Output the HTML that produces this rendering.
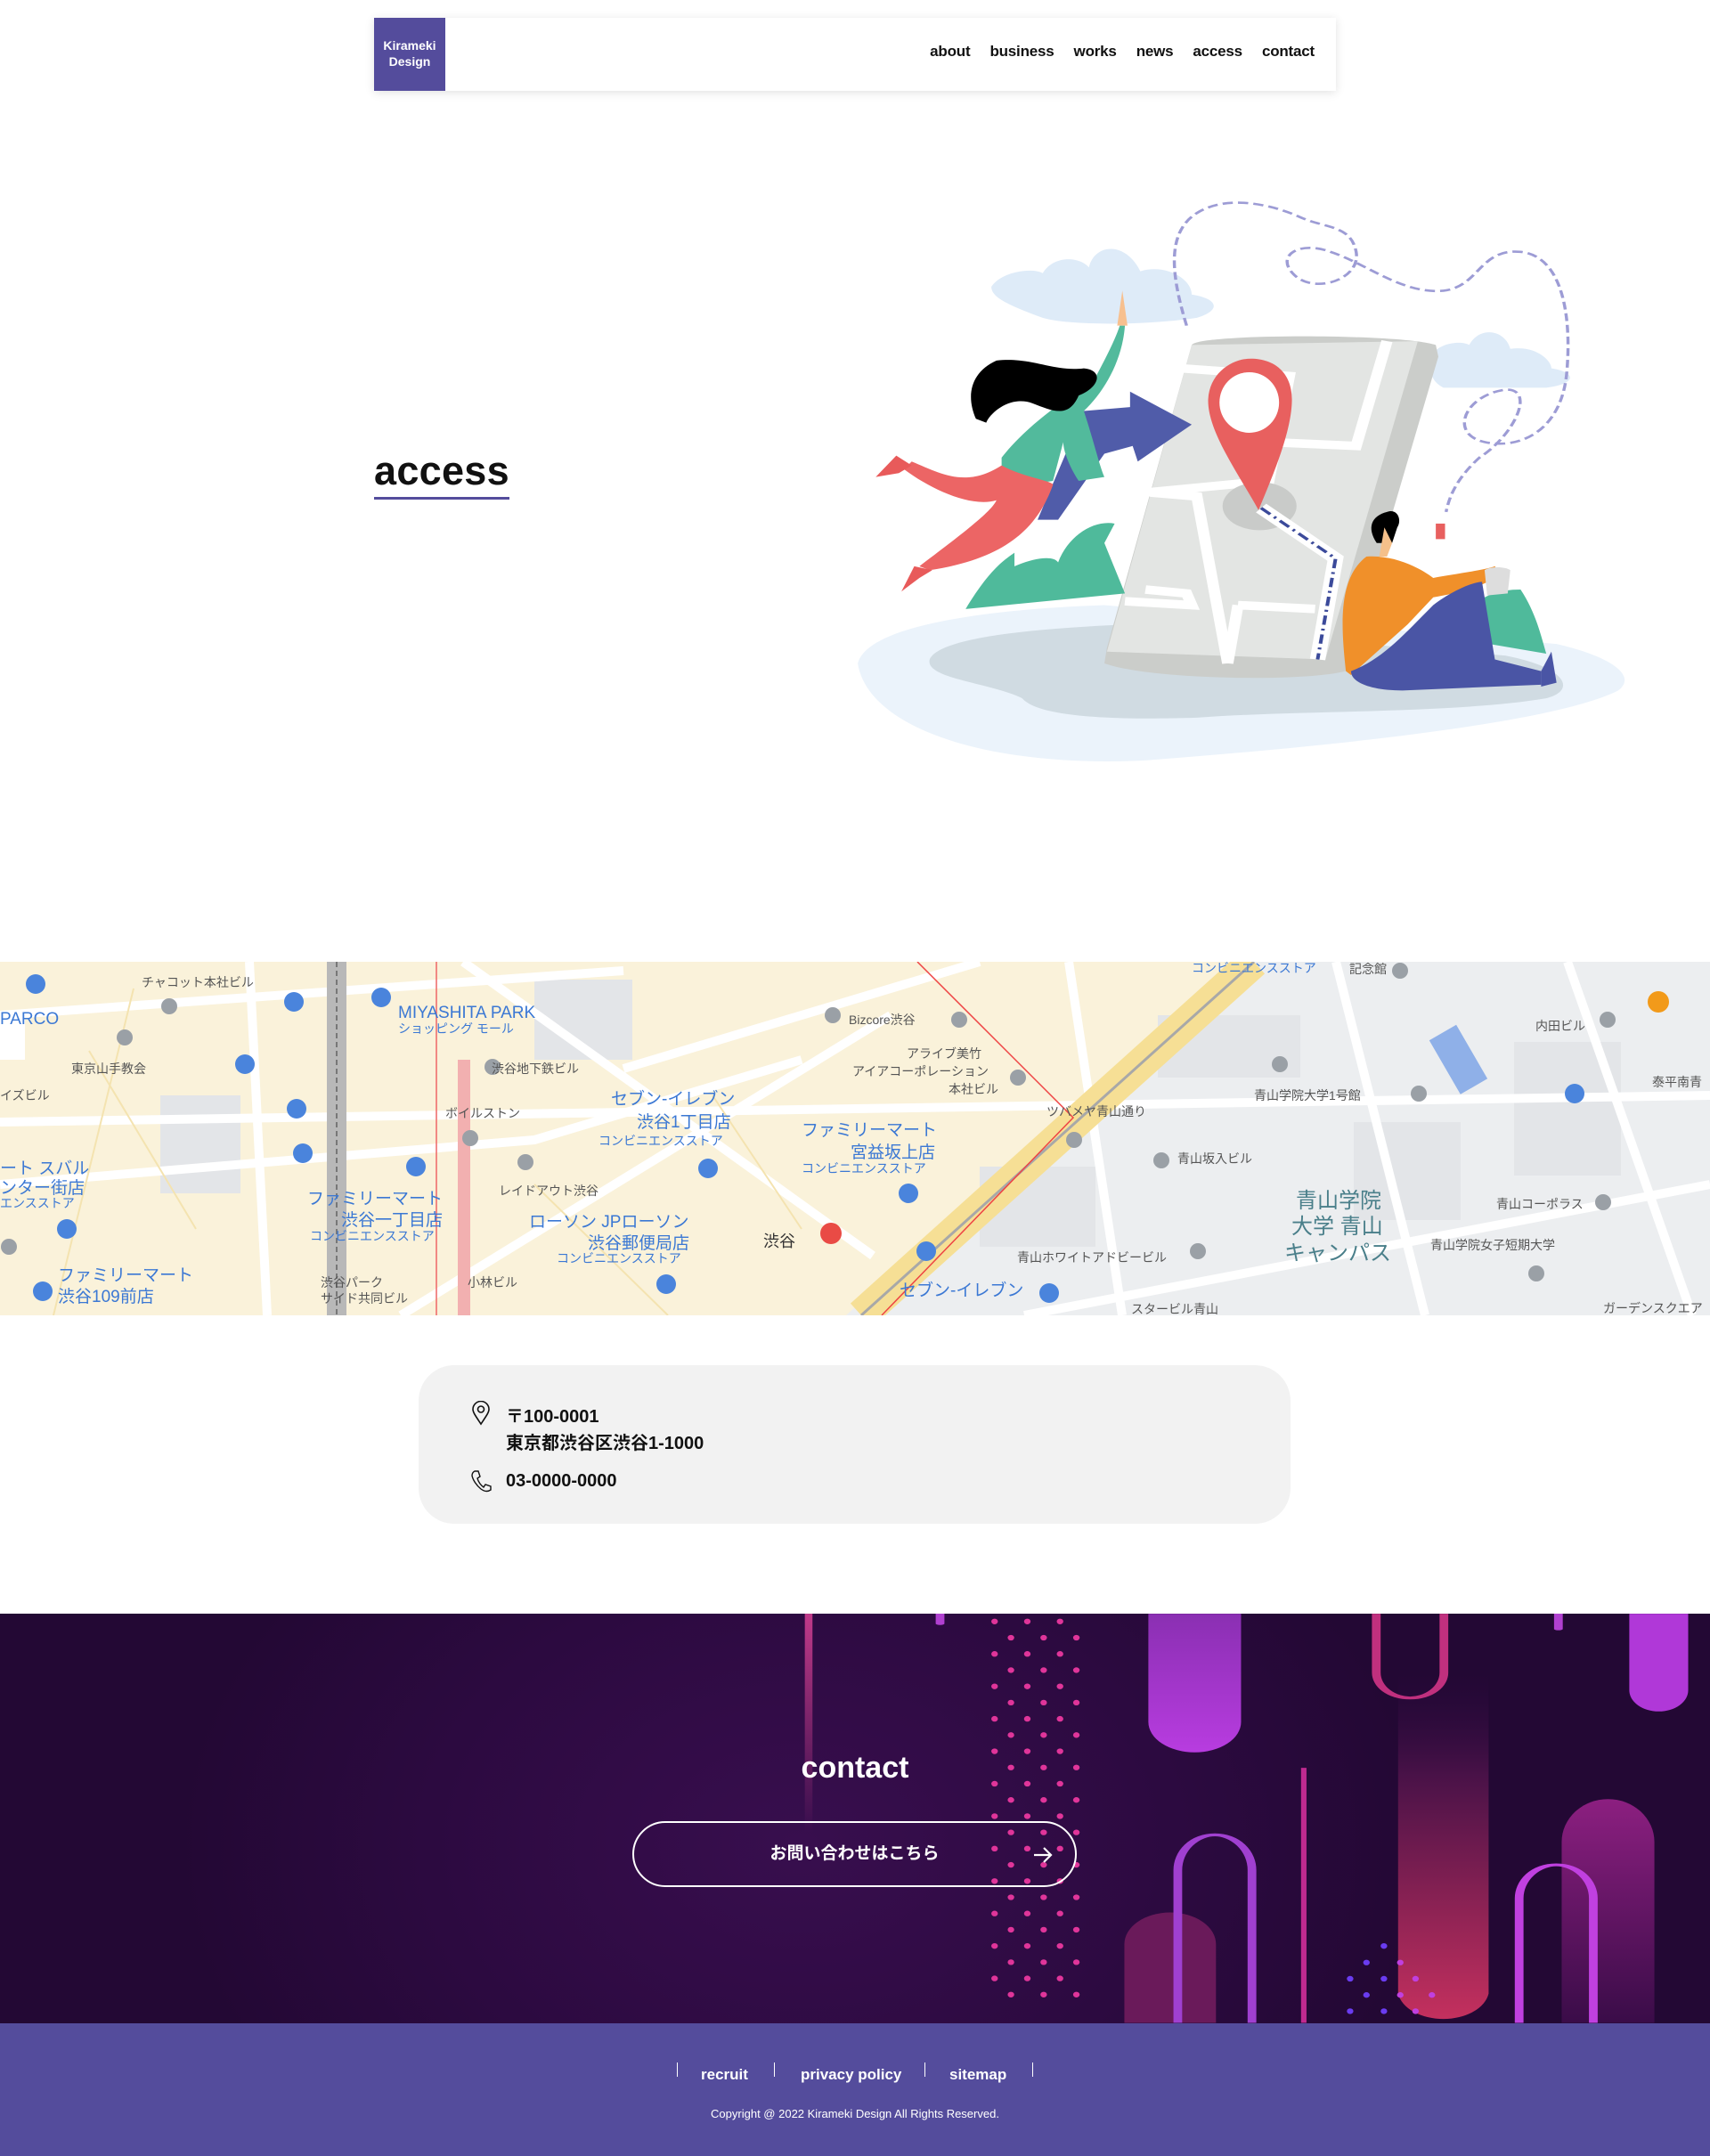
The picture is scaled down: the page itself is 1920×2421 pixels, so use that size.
<!DOCTYPE html>
<html><head><meta charset="utf-8"><style>
*{margin:0;padding:0;box-sizing:border-box}
body{width:1920px;height:2421px;position:relative;background:#fff;font-family:"Liberation Sans","Noto Sans CJK JP",sans-serif;overflow:hidden;color:#111}
.hdr{position:absolute;left:420px;top:20px;width:1080px;height:82px;background:#fff;box-shadow:0 2px 10px rgba(0,0,0,.12)}
.logo{position:absolute;left:0;top:0;width:80px;height:82px;background:#544c9c;color:#fff;font-weight:bold;font-size:14px;line-height:18px;text-align:center;padding-top:22px}
.nav{position:absolute;right:24px;top:28px;font-weight:bold;font-size:17px;letter-spacing:-.2px}
.nav span{margin-left:22px}
.h1{position:absolute;left:420px;top:502px;font-size:45px;font-weight:bold;letter-spacing:.3px;border-bottom:3px solid #544c9c;line-height:54px;padding-bottom:2px}
.addr{position:absolute;left:470px;top:1533px;width:979px;height:178px;background:#f2f2f2;border-radius:40px}
.addr p{position:absolute;left:98px;font-size:20px;font-weight:bold;line-height:24px}
.ct{position:absolute;left:0;top:1812px;width:1920px;height:460px;overflow:hidden;background:radial-gradient(ellipse 700px 500px at 900px 260px,#380e4e,#2c0a40 60%,#230834)}
.foot{position:absolute;left:0;top:2272px;width:1920px;height:149px;background:#544c9c;color:#fff}
</style></head><body>

<div class="hdr"><div class="logo">Kirameki<br>Design</div>
<div class="nav"><span>about</span><span>business</span><span>works</span><span>news</span><span>access</span><span>contact</span></div></div>

<div class="h1">access</div>

<svg style="position:absolute;left:940px;top:200px" width="900" height="680" viewBox="0 0 1560 1560" preserveAspectRatio="none">
<path d="M40 1250 C60 1150 300 1110 520 1100 L1400 1200 C1500 1230 1560 1280 1520 1320 C1400 1400 1000 1460 600 1500 C300 1520 60 1420 40 1250Z" fill="#ebf3fb"/>
<path d="M180 1240 C200 1180 400 1160 560 1150 L1300 1230 C1420 1260 1440 1320 1380 1340 C1200 1380 900 1370 700 1390 C450 1400 380 1370 360 1340 C300 1300 170 1290 180 1240Z" fill="#d0dbe2"/>
<g fill="#deebf8"><path d="M300 280 C320 240 380 230 400 245 C420 200 470 200 490 230 C500 170 560 160 590 240 C640 220 690 260 690 300 C740 310 750 340 700 360 C600 380 450 380 400 360 C340 330 300 310 300 280Z"/><path d="M1160 450 C1180 420 1220 420 1230 430 C1250 380 1300 390 1310 440 C1360 430 1390 470 1390 490 C1440 500 1440 530 1380 540 L1180 540 C1150 520 1150 480 1160 450Z"/></g>
<path d="M680 380 C650 250 640 140 700 90 C760 40 850 70 900 100 C950 130 1000 120 1010 190 C1020 260 930 300 890 250 C850 200 900 160 960 190 C1030 220 1100 300 1180 290 C1250 280 1250 180 1330 190 C1410 200 1430 350 1420 500 C1410 650 1330 700 1260 680 C1190 660 1220 560 1300 545 C1360 540 1320 660 1250 720 C1200 780 1190 830 1185 860" fill="none" stroke="#9d9cd5" stroke-width="6" stroke-dasharray="20 10"/>
<path d="M690 430 C700 400 1100 400 1165 430 L1170 460 L990 1270 C900 1300 600 1290 520 1250 L525 1210Z" fill="#cbcdca"/>
<path d="M690 430 L1130 420 L950 1240 L525 1220Z" fill="#e3e5e3"/>
<g fill="none" stroke="#fff" stroke-width="22"><path d="M670 490 L880 510 L840 780 L600 810"/><path d="M1070 420 L1010 690 L840 680"/><path d="M610 810 L700 820 L760 1250"/><path d="M600 1060 L680 1070 L690 1100 L560 1090"/><path d="M780 1100 L930 1110"/><path d="M780 1100 L760 1250"/></g>
<ellipse cx="822" cy="845" rx="72" ry="62" fill="#c9cbc9"/>
<path d="M825 850 L970 980 L935 1240" fill="none" stroke="#fff" stroke-width="30"/>
<path d="M825 850 L970 980 L935 1240" fill="none" stroke="#3b4a9a" stroke-width="7" stroke-dasharray="24 10 5 10"/>
<path d="M820 855 C780 760 720 650 722 570 C725 500 770 465 805 465 C850 465 885 500 885 570 C885 650 850 760 820 855Z" fill="#e8605f"/>
<ellipse cx="802" cy="578" rx="58" ry="78" fill="#fff"/>
<g fill="#4fba9b"><path d="M250 1110 C300 1000 330 980 345 965 L345 1000 C380 980 420 970 430 990 C450 920 500 880 540 890 L520 940 L560 1070 Z"/><path d="M1180 1180 C1230 1100 1260 1060 1330 1060 C1360 1120 1370 1180 1380 1225Z"/></g>
<path d="M480 600 L570 590 L570 550 L690 635 L585 730 L575 690 L520 710 L430 880 L390 880Z" fill="#505ca9"/>
<path d="M320 720 C380 620 460 560 500 520 C520 470 540 420 550 380 L560 380 C555 470 520 550 480 600 C500 680 510 740 520 770 L470 780 C450 740 440 700 440 680 L420 780 C380 790 340 770 320 740Z" fill="#52ba9c"/>
<path d="M545 380 L555 290 L565 380Z" fill="#f7c08f"/>
<path d="M270 620 C250 560 260 500 310 470 C380 460 420 500 480 490 C520 495 510 540 470 560 C450 620 420 600 380 580 C340 560 300 600 290 630Z" fill="#000"/>
<path d="M320 740 C360 770 420 780 420 790 C390 900 330 980 180 1010 L160 1000 C240 920 300 860 310 830 C260 850 180 800 130 750 L145 730 C200 760 250 800 320 740Z" fill="#ec6565"/>
<path d="M75 770 L115 715 L145 740 L120 760Z" fill="#e85a5a"/><path d="M125 1065 L150 1000 L185 1010 L160 1030Z" fill="#e85a5a"/>
<path d="M990 1270 C980 1150 975 1030 1030 975 C1080 970 1130 1000 1160 1030 C1200 1020 1260 1010 1280 1000 L1290 1020 C1250 1060 1200 1070 1160 1080 L1110 1150 L1000 1280Z" fill="#f0902a"/>
<path d="M1000 1270 C1060 1240 1100 1180 1160 1100 C1200 1060 1240 1040 1255 1040 L1280 1240 L1370 1270 L1370 1305 L1100 1320 C1040 1320 1000 1300 1000 1270Z" fill="#4a55a5"/>
<path d="M1370 1270 L1390 1220 L1400 1300 L1370 1310Z" fill="#4a55a5"/>
<path d="M1050 940 C1030 900 1040 870 1070 860 C1090 850 1100 880 1090 900 L1080 940Z" fill="#000"/>
<path d="M1065 900 L1080 940 L1070 975 L1055 975Z" fill="#f5c08a"/>
<rect x="1165" y="890" width="18" height="40" fill="#e8605f"/>
<path d="M1260 1010 C1270 1000 1300 1000 1310 1010 L1305 1070 L1265 1075Z" fill="#ddd"/>
</svg>

<svg style="position:absolute;left:0;top:1080px" width="1920" height="397" viewBox="0 0 1920 397">
<rect width="1920" height="397" fill="#eceef0"/>
<path d="M0 0 L1390 0 L950 397 L0 397Z" fill="#faf2da"/>
<g fill="#e3e5e8"><rect x="600" y="20" width="110" height="90"/><rect x="180" y="150" width="90" height="110"/><rect x="1520" y="180" width="120" height="110"/><rect x="1300" y="60" width="160" height="70"/><rect x="1700" y="90" width="120" height="150"/><rect x="1100" y="230" width="130" height="90"/></g>
<rect x="1620" y="75" width="35" height="70" fill="#8fb0e8" transform="rotate(-30 1637 110)"/>
<g stroke="#fff" stroke-width="10" fill="none"><path d="M0 60 L700 10"/><path d="M0 250 L600 200 L900 110"/><path d="M450 397 L1000 60"/><path d="M520 0 L980 330"/><path d="M280 0 L300 397"/><path d="M0 180 L1920 150"/><path d="M1500 0 L1600 397"/><path d="M1150 397 L1920 250"/><path d="M700 120 L1100 0"/><path d="M1200 0 L1260 397"/><path d="M1760 0 L1900 397"/></g>
<g stroke="#f4e3b0" stroke-width="2" fill="none"><path d="M100 100 L220 300"/><path d="M600 250 L750 397"/><path d="M800 150 L900 300"/><path d="M150 30 L60 397"/></g>
<path d="M1408 0 L967 397" stroke="#f6df95" stroke-width="36"/>
<path d="M1408 0 L967 397" stroke="#a8a8a8" stroke-width="3"/>
<path d="M1030 0 L1205 175 L990 397" stroke="#e44" stroke-width="1.5" fill="none"/>
<rect x="367" y="0" width="22" height="397" fill="#b8b8b8"/><path d="M378 0 V397" stroke="#777" stroke-width="2" stroke-dasharray="6 4"/>
<rect x="514" y="110" width="14" height="287" fill="#f2b0b0"/>
<path d="M490 0 L490 397" stroke="#e66" stroke-width="1.5"/>
<rect x="0" y="55" width="28" height="55" fill="#fff"/>
<g fill="#9aa0a6"><circle cx="190" cy="50" r="9"/><circle cx="140" cy="85" r="9"/><circle cx="553" cy="118" r="9"/><circle cx="528" cy="198" r="9"/><circle cx="590" cy="225" r="9"/><circle cx="935" cy="60" r="9"/><circle cx="1077" cy="65" r="9"/><circle cx="1143" cy="130" r="9"/><circle cx="1437" cy="115" r="9"/><circle cx="1593" cy="148" r="9"/><circle cx="1206" cy="200" r="9"/><circle cx="1304" cy="223" r="9"/><circle cx="1345" cy="325" r="9"/><circle cx="1800" cy="270" r="9"/><circle cx="1725" cy="350" r="9"/><circle cx="1572" cy="10" r="9"/><circle cx="1805" cy="65" r="9"/><circle cx="10" cy="320" r="9"/></g>
<g fill="#4a84dc"><circle cx="40" cy="25" r="11"/><circle cx="330" cy="45" r="11"/><circle cx="275" cy="115" r="11"/><circle cx="333" cy="165" r="11"/><circle cx="340" cy="215" r="11"/><circle cx="467" cy="230" r="11"/><circle cx="795" cy="232" r="11"/><circle cx="1020" cy="260" r="11"/><circle cx="1040" cy="325" r="11"/><circle cx="748" cy="362" r="11"/><circle cx="75" cy="300" r="11"/><circle cx="48" cy="370" r="11"/><circle cx="1768" cy="148" r="11"/><circle cx="1178" cy="372" r="11"/><circle cx="428" cy="40" r="11"/></g>
<circle cx="933" cy="305" r="12" fill="#e94b45"/><circle cx="1862" cy="45" r="12" fill="#f29a1a"/>
<g font-family="Liberation Sans,Noto Sans CJK JP,sans-serif">
<g fill="#3b78d4" font-size="19"><text x="447" y="63">MIYASHITA PARK</text><text x="0" y="70">PARCO</text><text x="686" y="160">セブン-イレブン</text><text x="715" y="186">渋谷1丁目店</text><text x="900" y="195">ファミリーマート</text><text x="955" y="220">宮益坂上店</text><text x="594" y="298">ローソン JPローソン</text><text x="660" y="322">渋谷郵便局店</text><text x="345" y="272">ファミリーマート</text><text x="383" y="296">渋谷一丁目店</text><text x="65" y="358">ファミリーマート</text><text x="65" y="382">渋谷109前店</text><text x="0" y="238">ート スバル</text><text x="0" y="260">ンター街店</text><text x="1010" y="375">セブン-イレブン</text></g>
<g fill="#3b78d4" font-size="14"><text x="447" y="80">ショッピング モール</text><text x="672" y="206">コンビニエンスストア</text><text x="900" y="237">コンビニエンスストア</text><text x="625" y="338">コンビニエンスストア</text><text x="348" y="313">コンビニエンスストア</text><text x="1338" y="12">コンビニエンスストア</text><text x="0" y="276">エンスストア</text></g>
<g fill="#555" font-size="14"><text x="159" y="28">チャコット本社ビル</text><text x="953" y="70">Bizcore渋谷</text><text x="1018" y="108">アライブ美竹</text><text x="957" y="128">アイアコーポレーション</text><text x="1065" y="148">本社ビル</text><text x="1175" y="173">ツバメヤ青山通り</text><text x="1408" y="155">青山学院大学1号館</text><text x="1322" y="226">青山坂入ビル</text><text x="1142" y="337">青山ホワイトアドビービル</text><text x="1606" y="323">青山学院女子短期大学</text><text x="1680" y="277">青山コーポラス</text><text x="1724" y="77">内田ビル</text><text x="1855" y="140">泰平南青</text><text x="80" y="125">東京山手教会</text><text x="552" y="125">渋谷地下鉄ビル</text><text x="500" y="175">ボイルストン</text><text x="560" y="262">レイドアウト渋谷</text><text x="525" y="365">小林ビル</text><text x="360" y="365">渋谷パーク</text><text x="360" y="383">サイド共同ビル</text><text x="1515" y="13">記念館</text><text x="1800" y="394">ガーデンスクエア</text><text x="1270" y="395">スタービル青山</text><text x="0" y="155">イズビル</text></g>
<text x="857" y="320" fill="#333" font-size="18">渋谷</text>
<g fill="#4a7f8a" font-size="24"><text x="1455" y="276">青山学院</text><text x="1450" y="305">大学 青山</text><text x="1442" y="335">キャンパス</text></g></g>
</svg>

<div class="addr">
<svg style="position:absolute;left:58px;top:40px" width="24" height="28" viewBox="0 0 24 28"><path d="M12 26 C6 17 3 13 3 9.5 A9 9 0 0 1 21 9.5 C21 13 18 17 12 26Z" fill="none" stroke="#111" stroke-width="1.6"/><circle cx="12" cy="9.5" r="3.5" fill="none" stroke="#111" stroke-width="1.6"/></svg>
<p style="top:46px">〒100-0001</p>
<p style="top:76px">東京都渋谷区渋谷1-1000</p>
<svg style="position:absolute;left:58px;top:117px" width="24" height="26" viewBox="0 0 24 26"><path d="M5 2 L9 2 L11 8 L8 10 C9 14 12 18 15 20 L17 17 L23 19 L23 23 C20 25 16 25 12 22 C7 18 3 12 2 7 C2 5 3 3 5 2Z" fill="none" stroke="#111" stroke-width="1.4"/></svg>
<p style="top:118px">03-0000-0000</p>
</div>

<div class="ct">
<svg style="position:absolute;left:0;top:-13px" width="1920" height="621" viewBox="0 0 1568 1568" preserveAspectRatio="none">
<defs>
<linearGradient id="g1" x1="0" y1="0" x2="0" y2="1"><stop offset="0" stop-color="#8a2fb2"/><stop offset="1" stop-color="#b83ce0"/></linearGradient>
<linearGradient id="g2" x1="0" y1="0" x2="0" y2="1"><stop offset="0" stop-color="#2c0a40" stop-opacity="0"/><stop offset=".3" stop-color="#4a1248"/><stop offset="1" stop-color="#c4305e"/></linearGradient>
<linearGradient id="g3" x1="0" y1="0" x2="0" y2="1"><stop offset="0" stop-color="#8c1f80"/><stop offset="1" stop-color="#3a0c48"/></linearGradient>
<linearGradient id="g4" x1="0" y1="0" x2="0" y2="1"><stop offset="0" stop-color="#c03a8a"/><stop offset="1" stop-color="#c03a8a" stop-opacity="0"/></linearGradient>
</defs>
<rect x="738" y="33" width="7" height="620" fill="url(#g4)"/>
<rect x="858" y="20" width="8" height="45" rx="4" fill="#b040d0"/>
<rect x="1425" y="20" width="8" height="60" rx="4" fill="#b040d0"/>
<path d="M1053 33 H1138 V340 A42 85 0 0 1 1053 340Z" fill="url(#g1)"/>
<path d="M1494 33 H1548 V250 A27 60 0 0 1 1494 250Z" fill="#b038d8"/>
<path d="M1282 200 H1365 V1110 A42 85 0 0 1 1282 1110Z" fill="url(#g2)"/>
<path d="M1262 33 V200 A31 72 0 0 0 1324 200 V33" fill="none" stroke="#c0307e" stroke-width="8"/>
<path d="M1432 1193 V680 A42 120 0 0 1 1517 680 V1193Z" fill="url(#g3)"/>
<path d="M1031 1193 V970 A42 90 0 0 1 1115 970 V1193Z" fill="#6a1a5a"/>
<path d="M1080 1193 V760 A34 100 0 0 1 1148 760 V1193" fill="none" stroke="#a040d0" stroke-width="8"/>
<path d="M1393 1193 V840 A34 95 0 0 1 1461 840 V1193" fill="none" stroke="#c040e0" stroke-width="8"/>
<rect x="1193" y="470" width="5" height="723" fill="#c02a90"/>
<g fill="#e0359a">
<g id="dr"><ellipse cx="912" cy="55" rx="3" ry="8"/><ellipse cx="942" cy="55" rx="3" ry="8"/><ellipse cx="972" cy="55" rx="3" ry="8"/><ellipse cx="927" cy="101" rx="3" ry="8"/><ellipse cx="957" cy="101" rx="3" ry="8"/><ellipse cx="987" cy="101" rx="3" ry="8"/></g>
<use href="#dr" y="92"/><use href="#dr" y="184"/><use href="#dr" y="276"/><use href="#dr" y="368"/><use href="#dr" y="460"/><use href="#dr" y="552"/><use href="#dr" y="644"/><use href="#dr" y="736"/><use href="#dr" y="828"/><use href="#dr" y="920"/><use href="#dr" y="1012"/>
</g>
<g fill="#6a3cf0"><ellipse cx="1269" cy="975" rx="3" ry="8"/><ellipse cx="1253" cy="1022" rx="3" ry="8"/><ellipse cx="1238" cy="1068" rx="3" ry="8"/><ellipse cx="1269" cy="1068" rx="3" ry="8"/><ellipse cx="1253" cy="1114" rx="3" ry="8"/><ellipse cx="1238" cy="1160" rx="3" ry="8"/><ellipse cx="1269" cy="1160" rx="3" ry="8"/></g>
<g fill="#c040e0"><ellipse cx="1284" cy="1022" rx="3" ry="8"/><ellipse cx="1298" cy="1068" rx="3" ry="8"/><ellipse cx="1284" cy="1114" rx="3" ry="8"/><ellipse cx="1298" cy="1160" rx="3" ry="8"/><ellipse cx="1313" cy="1114" rx="3" ry="8"/></g>
</svg>
<div style="position:absolute;left:0;width:1920px;top:154px;text-align:center;color:#fff;font-size:34px;font-weight:bold">contact</div>
<div style="position:absolute;left:710px;top:233px;width:499px;height:74px;border:2px solid #fff;border-radius:37px;color:#fff;font-size:19px;font-weight:bold;text-align:center;line-height:70px">お問い合わせはこちら
<svg style="position:absolute;right:24px;top:25px" width="24" height="22" viewBox="0 0 24 22"><path d="M2 11 H21 M13 3 L21 11 L13 19" fill="none" stroke="#fff" stroke-width="2.2"/></svg></div>
</div>

<div class="foot">
<div style="position:absolute;top:48px;left:0;width:1920px;font-size:17px;font-weight:bold">
<span style="position:absolute;left:760px;top:-4px;width:1px;height:16px;background:#fff"></span>
<span style="position:absolute;left:787px">recruit</span>
<span style="position:absolute;left:869px;top:-4px;width:1px;height:16px;background:#fff"></span>
<span style="position:absolute;left:899px">privacy policy</span>
<span style="position:absolute;left:1038px;top:-4px;width:1px;height:16px;background:#fff"></span>
<span style="position:absolute;left:1066px">sitemap</span>
<span style="position:absolute;left:1159px;top:-4px;width:1px;height:16px;background:#fff"></span>
</div>
<div style="position:absolute;top:94px;left:0;width:1920px;text-align:center;font-size:13px">Copyright @ 2022 Kirameki Design All Rights Reserved.</div>
</div>
</body></html>
